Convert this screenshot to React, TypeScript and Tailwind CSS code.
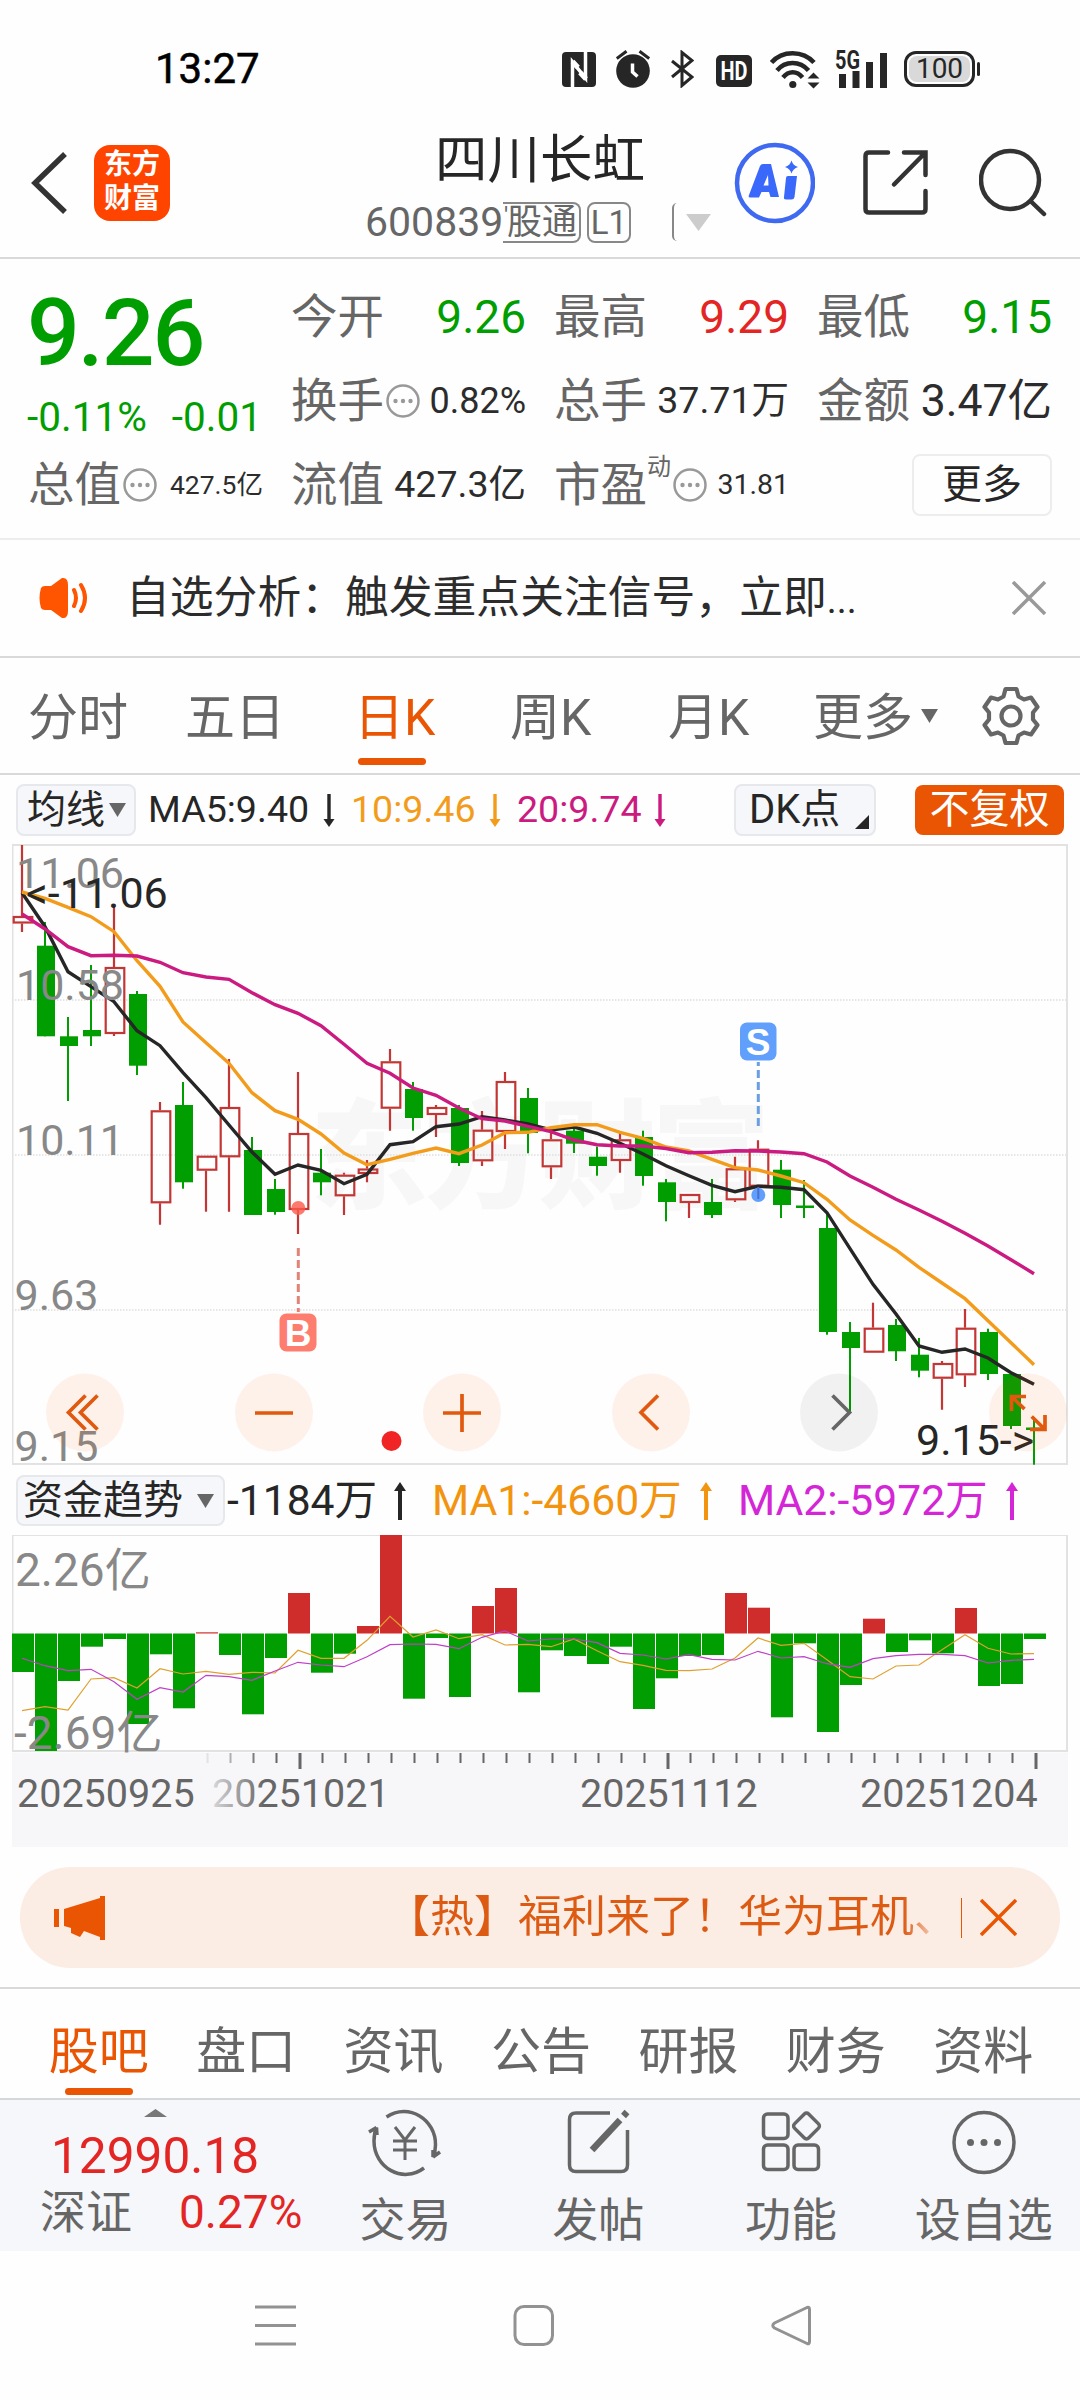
import type { ReactNode } from "react";

const GREEN = "#009e00";
const RED = "#c23735";

// [high, body top, body bottom, low, up?] in chart pixels, one entry per trading day
const CANDLES: [number, number, number, number, number][] = [
  [845, 916, 923.5, 932, 1], [922, 945.7, 1036.3, 1036.3, 0], [1017, 1036.3, 1046, 1101, 0],
  [965, 1030, 1036.3, 1046, 0], [906, 967, 1034, 1036, 1], [991, 994, 1065.7, 1075, 0],
  [1102, 1110.3, 1203.3, 1224.7, 1], [1082, 1105, 1182.3, 1188.7, 0], [1155.7, 1155.7, 1170.7, 1211.7, 1],
  [1059, 1107, 1157.3, 1211.7, 1], [1137, 1150, 1215, 1215, 0], [1179, 1189, 1212, 1214.7, 0],
  [1072, 1133, 1210, 1234, 1], [1149, 1172.7, 1182.3, 1195.3, 0], [1172.7, 1174.7, 1196.3, 1215, 1],
  [1160, 1168.5, 1174, 1182.3, 1], [1049, 1061.3, 1108.7, 1130.7, 1], [1082, 1089, 1118, 1130.7, 0],
  [1105, 1107, 1115, 1137, 1], [1105, 1108, 1163, 1166, 0], [1111, 1129.7, 1161.3, 1166, 1],
  [1072, 1081, 1132, 1149, 1], [1088, 1098, 1133, 1153.3, 0], [1131.7, 1139.3, 1167.3, 1179, 1],
  [1126, 1130.7, 1143.7, 1153, 0], [1146.7, 1156.7, 1166, 1175.7, 0], [1133, 1139.3, 1161, 1172.7, 1],
  [1130.7, 1137, 1176, 1185.7, 0], [1179, 1182.3, 1202, 1221.3, 0], [1194, 1194, 1203, 1218, 1],
  [1179, 1202, 1215, 1218, 0], [1156.7, 1168.3, 1200.3, 1202, 1], [1140.3, 1148.7, 1186.7, 1199, 1],
  [1160, 1169.7, 1205, 1218, 0], [1180, 1205.5, 1208, 1218, 0], [1213, 1228, 1332, 1334.7, 0],
  [1322, 1332, 1348, 1413, 0], [1302.7, 1327.7, 1352.7, 1352.7, 1], [1319, 1325, 1351.3, 1361, 0],
  [1338, 1354.7, 1370.7, 1377.3, 0], [1361, 1363, 1378.7, 1409.7, 1], [1309, 1327.7, 1375.3, 1387, 1],
  [1328.7, 1332, 1374, 1380, 0], [1374, 1374, 1426, 1429, 0], [1419, 1427.5, 1430, 1464.7, 0],
];

const MA5 = [
  892.7, 926.7, 971.7, 986.7, 1001.7, 1030.7, 1045.7, 1072.7, 1097.7, 1125, 1152, 1174.3, 1165, 1170.3, 1183.7,
  1174.3, 1144.7, 1141.7, 1126.7, 1124, 1116.7, 1120, 1124, 1130, 1127, 1133.3, 1143.3, 1154, 1165.7, 1175.7,
  1185.3, 1191.7, 1186.3, 1187.3, 1189.7, 1212.7, 1248.7, 1284.3, 1314, 1346, 1352.3, 1349, 1358, 1372.7, 1384.3,
];
const MA10 = [
  892, 898.3, 907.3, 916.7, 931.7, 960.7, 986.3, 1022, 1042.7, 1063.3, 1092.7, 1110.7, 1119.3, 1134, 1153,
  1164.7, 1159.3, 1153.3, 1148, 1153.7, 1145, 1132.7, 1132.3, 1127.7, 1124.7, 1124.7, 1132.3, 1138.3, 1147, 1151,
  1159.3, 1167.7, 1170, 1176, 1182.7, 1199.3, 1220, 1235.3, 1250, 1267.3, 1283, 1298.7, 1320.7, 1342.7, 1364.7,
];
const MA20 = [
  914, 929, 946.7, 955.7, 955.3, 956, 962.3, 972.7, 977, 979.3, 992.7, 1004.7, 1013.3, 1025.7, 1044.3,
  1063.3, 1073.3, 1088, 1095.3, 1108, 1118.7, 1121, 1126.3, 1131.7, 1140, 1144.7, 1146, 1146, 1148.5, 1152.7,
  1152.3, 1150.7, 1151, 1152, 1153.7, 1162, 1176, 1187.3, 1199.3, 1210, 1221.3, 1233.3, 1246, 1259.7, 1273.7,
];

const ZERO = 1633.5;
const FLOW = [
  1672, 1751, 1681, 1646.7, 1639, 1724, 1654.3, 1708.3, 1632.3, 1655, 1714.3, 1658, 1593, 1672.7, 1653.7,
  1626, 1535, 1698.7, 1638, 1697, 1606, 1588, 1692.3, 1650.3, 1656, 1664, 1646.7, 1709, 1678.3, 1656,
  1655, 1593, 1607.7, 1717.3, 1643.3, 1732, 1685, 1618.7, 1652, 1640.3, 1653.3, 1608, 1686, 1684, 1639,
];
const FLOW_MA1 = [
  1710.7, 1706.7, 1710, 1679, 1677.7, 1688, 1668.7, 1674, 1671.3, 1674.3, 1672.3, 1673, 1650.3, 1658.3, 1658.3,
  1640.3, 1616.3, 1637, 1630, 1638.7, 1634.7, 1645, 1644.3, 1646.7, 1639, 1650.7, 1661.7, 1665.3, 1670.3, 1670.7,
  1669, 1658, 1638, 1645.3, 1643.3, 1659.7, 1676.7, 1679, 1666, 1665, 1649.7, 1634.7, 1648.3, 1654, 1653.7,
];
const FLOW_MA2 = [
  1658.3, 1665.7, 1670.7, 1669.3, 1681.7, 1699.3, 1687.7, 1692, 1675.3, 1676.7, 1680.3, 1671, 1662.3, 1665, 1666.7,
  1656.7, 1644.7, 1644, 1644.3, 1648.7, 1637.3, 1631, 1641, 1639, 1639, 1642.7, 1653.3, 1655, 1659, 1654.7,
  1659.3, 1660, 1651.3, 1658, 1656.7, 1663.7, 1667.3, 1658.7, 1655.7, 1654.3, 1654.3, 1655.7, 1663, 1660.3, 1659.3,
];

const dayX = (i: number) => 22 + 23 * i;
const points = (ys: number[]) => ys.map((y, i) => `${dayX(i)},${y}`).join(" ");

function StatusBar() {
  return (
    <div className="flex h-[136px] items-center pt-[2px] pl-[155px] text-[#262626]">
      <span className="w-[407px] text-[42px] leading-none text-black [-webkit-text-stroke:0.5px_black]">13:27</span>
      <svg width="34" height="35" viewBox="0 0 34 35">
        <rect width="34" height="35" rx="4" fill="#262626" />
        <path d="M10.500 35V10L23.500 26V0" fill="none" stroke="#fff" strokeWidth="3.500" />
        <path d="M10.500 9.500L16 15.500M18 20.500L24 27" stroke="#fff" strokeWidth="5" />
      </svg>
      <svg className="ml-5" width="34" height="38" viewBox="0 0 34 38" fill="none" stroke="#262626">
        <circle cx="17" cy="21" r="16.800" fill="#262626" stroke="none" />
        <path d="M0.800 8.500L10.500 1.200M33.200 8.500L23.500 1.200" strokeWidth="3" />
        <path d="M16.500 13.500V22L21.500 26.500" stroke="#fff" strokeWidth="3.500" />
      </svg>
      <svg className="ml-[21px]" width="23" height="38" viewBox="0 0 23 38" fill="none" stroke="#262626" strokeWidth="3">
        <path d="M1 11L21 27L11 35.500V2.500L21 10.500L1 27" />
      </svg>
      <span className="mt-[3px] ml-[22px] flex h-8 w-9 items-center justify-center rounded-[5px] bg-[#262626]">
        <svg className="overflow-visible" width="28" height="30" viewBox="0 0 28 30">
          <text x="0.500" y="24" textLength="27" lengthAdjust="spacingAndGlyphs" fontSize="25" fontWeight="700" fill="#fff">HD</text>
        </svg>
      </span>
      <svg className="ml-[18px]" width="50" height="39" viewBox="0 0 50 39" fill="none" stroke="#262626" strokeWidth="4.500">
        <path d="M1.500 12.500C12 0 33 0 44 12.500" />
        <path d="M7 20.500C15 10.500 30 10.500 38.500 20.500" />
        <path d="M13 27.500C18.500 20.500 27 20.500 32.500 27.500" />
        <circle cx="22.800" cy="34.500" r="3.600" fill="#262626" stroke="none" />
        <path d="M37.500 28.500L43.500 22.500L49.500 28.500ZM37.500 32.500L43.500 38.500L49.500 32.500Z" fill="#262626" stroke="none" />
      </svg>
      <svg className="ml-[15px] overflow-visible" width="53" height="37" viewBox="0 0 53 37" fill="#262626">
        <text x="0" y="18" textLength="25" lengthAdjust="spacingAndGlyphs" fontSize="25" fontWeight="700">5G</text>
        <rect x="4" y="23" width="7" height="14" />
        <rect x="17.500" y="20" width="7" height="17" />
        <rect x="31" y="11" width="7" height="26" />
        <rect x="45" y="2" width="7" height="35" />
      </svg>
      <div className="ml-4 flex h-9 w-[71px] items-center justify-center rounded-[12px] border-[3px] border-[#262626] p-[2px]">
        <span className="flex h-full w-full items-center justify-center rounded-[8px] bg-[#d9d9d9] text-[28px] leading-none">100</span>
      </div>
      <span className="ml-[2px] h-3.5 w-[3px] rounded-full bg-[#262626]" />
    </div>
  );
}

function Header() {
  return (
    <header className="flex h-[123px] border-b-2 border-[#d9d9d9]">
      <svg className="mt-4 ml-[31px]" width="37" height="62" viewBox="0 0 37 62" fill="none" stroke="#333" strokeWidth="5.500">
        <path d="M34 2L4 31L34 60" />
      </svg>
      <div className="mt-[9px] ml-[26px] flex h-[76px] w-[76px] flex-col items-center justify-center rounded-[16px] bg-[#ff4400] pb-[2px] text-[28px] leading-[34px] font-bold text-white">
        <span>东方</span>
        <span>财富</span>
      </div>
      <div className="ml-[195px] w-[370px]">
        <h1 className="pl-[70px] text-[52.500px] leading-[49px] font-normal text-[#262626]">四川长虹</h1>
        <div className="mt-[16px] flex h-[42px] items-center text-[#666]">
          <span className="w-[138px] text-[41px] leading-none">600839</span>
          <span className="flex h-[41px] w-[78px] items-center justify-end overflow-hidden rounded-r-[8px] border-2 border-l-0 border-[#888] pr-[2px] text-[35px] leading-none">
            <span className="w-[3px] self-start text-[24px]">'</span>股通
          </span>
          <span className="ml-[6px] flex h-[41px] w-[44px] items-center justify-center rounded-[8px] border-2 border-[#888] text-[33px] leading-none">L1</span>
          <span className="ml-[41px] h-[38px] w-[5px] rounded-l-[8px] border-l-2 border-[#888]" />
          <svg className="ml-[9px]" width="25" height="17" viewBox="0 0 25 17">
            <path d="M0 0H25L12.500 17Z" fill="#ccc" />
          </svg>
        </div>
      </div>
      <svg className="mt-[6px] ml-[-2px]" width="82" height="82" viewBox="0 0 82 82">
        <circle cx="42" cy="41" r="38" fill="none" stroke="#3e69f0" strokeWidth="4.500" />
        <path d="M30 22H38L46 55H37.500L36 50H28.500L26 55.500H17Q15 55.500 16 53L27 24Q28 22 30 22ZM35 33L30.500 43.500H35.500Z" fill="#3a68fb" fillRule="evenodd" />
        <path d="M55 34H64L61.500 55Q61 57.500 58.500 57.500H53Q50.500 57.500 51 55L53 36Q53 34 55 34Z" fill="#3a68fb" />
        <path d="M58.500 18.500Q60 23.500 65 25Q60 26.500 58.500 31.500Q57 26.500 52 25Q57 23.500 58.500 18.500Z" fill="#3a68fb" />
      </svg>
      <svg className="mt-[13px] ml-[47px]" width="67" height="67" viewBox="0 0 67 67" fill="none" stroke="#333" strokeWidth="4.500" strokeLinecap="round">
        <path d="M26 3.500H7Q3.500 3.500 3.500 7V60Q3.500 63.500 7 63.500H60Q63.500 63.500 63.500 60V42" />
        <path d="M42 3.500H63.500V26M61 6L32 35.500" strokeLinejoin="miter" />
      </svg>
      <svg className="mt-[11px] ml-[50px]" width="68" height="70" viewBox="0 0 68 70" fill="none" stroke="#333" strokeWidth="4.500" strokeLinecap="round">
        <circle cx="31" cy="33" r="29" />
        <path d="M52 54.500L65 67" />
      </svg>
    </header>
  );
}

function MoreDots() {
  return (
    <svg className="ml-[2px] shrink-0" width="34" height="34" viewBox="0 0 34 34" fill="#999">
      <circle cx="17" cy="17" r="15.500" fill="none" stroke="#999" strokeWidth="2.500" />
      <circle cx="9.500" cy="17" r="2.200" />
      <circle cx="17" cy="17" r="2.200" />
      <circle cx="24.500" cy="17" r="2.200" />
    </svg>
  );
}

function Stat({ label, children }: { label: ReactNode; children: ReactNode }) {
  return (
    <div className="flex h-[84px] items-center justify-between leading-none whitespace-nowrap text-[#2c2c2c]">
      <span className="flex items-center text-[46.500px] text-[#666]">{label}</span>
      {children}
    </div>
  );
}

function Stats() {
  return (
    <section className="grid h-[281px] grid-cols-4 content-start gap-x-[28px] border-b-2 border-[#ededed] px-7 pt-4">
      <div className="row-span-2 text-[#009e00]">
        <div className="mt-[14px] -ml-px text-[93px] leading-[90px] font-medium tracking-[-2px]">9.26</div>
        <div className="mt-[13px] -ml-px flex justify-between pr-px text-[40.500px] leading-[50px]">
          <span>-0.11%</span>
          <span>-0.01</span>
        </div>
      </div>
      <Stat label="今开"><span className="text-[46px] text-[#009e00]">9.26</span></Stat>
      <Stat label="最高"><span className="text-[46px] text-[#e32524]">9.29</span></Stat>
      <Stat label="最低"><span className="text-[46px] text-[#009e00]">9.15</span></Stat>
      <Stat label={<>换手<MoreDots /></>}><span className="text-[36px]">0.82%</span></Stat>
      <Stat label="总手"><span className="text-[37.500px]">37.71万</span></Stat>
      <Stat label="金额"><span className="text-[44.500px]">3.47亿</span></Stat>
      <Stat label={<>总值<MoreDots /></>}><span className="text-[26.500px]">427.5亿</span></Stat>
      <Stat label="流值"><span className="text-[37.500px]">427.3亿</span></Stat>
      <Stat label={<>市盈<span className="-mt-9 text-[24px]">动</span><MoreDots /></>}>
        <span className="text-[28.500px]">31.81</span>
      </Stat>
      <div className="flex h-[84px] items-center justify-end">
        <button className="h-[62px] w-[140px] rounded-[8px] border-2 border-[#ededed] text-[40px] leading-none text-[#262626]">更多</button>
      </div>
    </section>
  );
}

function Notice() {
  return (
    <section className="flex h-[118px] items-center border-b-2 border-[#d9d9d9] pl-[38px] text-[44px] leading-none text-[#2c2c2c]">
      <svg width="52" height="42" viewBox="0 0 52 42" fill="none" stroke="#ff5500" strokeWidth="4" strokeLinecap="round">
        <path d="M3 11Q0 21 3 31Q4 33 7 33H13L24 41Q30 42 30 34V8Q30 0 24 1L13 9H7Q4 9 3 11Z" fill="#ff5500" stroke="none" />
        <path d="M36 13Q40 21 36 29M43 8Q51 21 43 34" />
      </svg>
      <span className="mt-[2px] ml-[36px] text-[43.800px]">
        自选分析：触发重点关注信号，立即<span className="text-[38px]">...</span>
      </span>
      <svg className="ml-auto mr-[34px]" width="34" height="34" viewBox="0 0 34 34" stroke="#999" strokeWidth="3.500">
        <path d="M1 1L33 33M33 1L1 33" />
      </svg>
    </section>
  );
}

function ChartTabs() {
  return (
    <nav className="flex h-[117px] items-center border-b-2 border-[#d9d9d9] pl-[28px] text-[50px] leading-none text-[#666]">
      <span className="mt-[5px] w-[157px]">分时</span>
      <span className="mt-[5px] w-[169px]">五日</span>
      <span className="relative mt-[5px] flex w-[156px] text-[#ea5504]">
        日K
        <span className="absolute top-[65px] left-[4px] h-[7px] w-[68px] rounded-full bg-[#ea5504]" />
      </span>
      <span className="mt-[5px] w-[158px]">周K</span>
      <span className="mt-[5px] w-[145px]">月K</span>
      <span className="mt-[5px]">更多</span>
      <svg className="ml-[8px]" width="17" height="14" viewBox="0 0 17 14">
        <path d="M0 0H17L8.500 14Z" fill="#666" />
      </svg>
      <svg className="ml-[43px]" width="60" height="60" viewBox="0 0 60 60" fill="none" stroke="#666" strokeWidth="4.200" strokeLinejoin="round">
        <path d="M24.500 3H35.500L37.500 10.500L43 13.500L50 11.500L56.500 21L52 26.500V33.500L56.500 39L50 48.500L43 46.500L37.500 49.500L35.500 57H24.500L22.500 49.500L17 46.500L10 48.500L3.500 39L8 33.500V26.500L3.500 21L10 11.500L17 13.500L22.500 10.500Z" />
        <circle cx="30" cy="30" r="9.500" />
      </svg>
    </nav>
  );
}

function Arrow({ up, className }: { up?: boolean; className: string }) {
  return (
    <svg className={className} width="12" height="38" viewBox="0 0 12 38" fill="currentColor">
      <path d={up ? "M6 0L12 9H8V38H4V9H0Z" : "M6 36L11.500 28H7.700V3H4.300V28H0.500Z"} />
    </svg>
  );
}

function MaRow() {
  return (
    <div className="flex h-[69px] items-center pt-px pl-4 text-[37.600px] leading-none whitespace-nowrap">
      <div className="flex h-[52px] w-[120px] items-center rounded-[8px] border-2 border-[#e6e8ec] bg-[#f6f7fa] pl-[9px] text-[39px] text-[#262626]">
        均线
        <svg className="ml-[4px] shrink-0" width="17" height="14" viewBox="0 0 17 14">
          <path d="M0 0H17L8.500 14Z" fill="#666" />
        </svg>
      </div>
      <span className="ml-[12px] w-[162px] text-[#262626]">MA5:9.40</span>
      <Arrow className="ml-[13px] text-[#262626]" />
      <span className="ml-[16px] w-[125px] text-[#f39c1c]">10:9.46</span>
      <Arrow className="ml-[13px] text-[#f39c1c]" />
      <span className="ml-[16px] w-[125px] text-[#cb1a80]">20:9.74</span>
      <Arrow className="ml-[12px] text-[#cb1a80]" />
      <div className="ml-[68px] flex h-[52px] w-[142px] items-center justify-between rounded-[8px] border-2 border-[#e6e8ec] bg-[#f6f7fa] pr-[5px] pl-[13px] text-[40px] text-[#262626]">
        DK点
        <svg className="mt-6" width="14" height="14" viewBox="0 0 14 14">
          <path d="M14 0V14H0Z" fill="#262626" />
        </svg>
      </div>
      <div className="ml-[39px] flex h-[50px] w-[149px] items-center justify-center rounded-[8px] bg-[#ea5504] text-[40px] text-white">不复权</div>
    </div>
  );
}

function Candle({ i }: { i: number }) {
  const [high, top, bottom, low, up] = CANDLES[i];
  const x = dayX(i);
  if (up) {
    return (
      <g stroke={RED} strokeWidth="2.200" fill="none">
        <path d={`M${x} ${high}V${top}M${x} ${bottom}V${low}`} />
        <rect x={x - 8.3} y={top + 1} width="18.600" height={Math.max(bottom - top - 2, 1)} />
      </g>
    );
  }
  return (
    <g fill={GREEN}>
      <rect x={x - 1} y={high} width="2" height={low - high} />
      <rect x={x - 8} y={top} width="18" height={bottom - top} />
    </g>
  );
}

function PriceChart() {
  return (
    <svg className="ml-3 block" width="1056" height="622" viewBox="12 844 1056 622" fontSize="43">
      <text x="310" y="1199" textLength="460" fontSize="118" fontWeight="900" fill="#f7f7f7">东方财富</text>
      <path d="M12 1000H1067M12 1155H1067M12 1310H1067" stroke="#dedede" strokeWidth="1.500" strokeDasharray="1.500 1.500" />
      <rect x="12.500" y="845" width="1054.500" height="619" fill="none" stroke="#e2e2e2" strokeWidth="2" />
      {CANDLES.map((_, i) => (
        <Candle key={i} i={i} />
      ))}
      <g fill="none" strokeWidth="3.400">
        <polyline points={points(MA5)} stroke="#262626" />
        <polyline points={points(MA10)} stroke="#f39c1c" />
        <polyline points={points(MA20)} stroke="#cb1a80" />
      </g>
      <g fill="#888">
        <text x="16" y="888">11.06</text>
        <text x="16" y="1000">10.58</text>
        <text x="16" y="1155">10.11</text>
        <text x="14.500" y="1310">9.63</text>
        <text x="14.500" y="1461">9.15</text>
      </g>
      <text x="26" y="908" fill="#262626">&lt;-11.06</text>
      <text x="916" y="1455" fill="#262626">9.15-&gt;</text>

      <circle cx="298.300" cy="1208" r="7" fill="#fd5a4a" fillOpacity="0.800" />
      <path d="M298.300 1248V1312" stroke="#e38378" strokeWidth="3" strokeDasharray="8 4" />
      <rect x="279.500" y="1313.500" width="37" height="38" rx="7" fill="#fd7e6f" />
      <text x="298" y="1346" textAnchor="middle" fontSize="37" fontWeight="700" fill="#fff" fontFamily="Liberation Sans">B</text>

      <circle cx="758.300" cy="1195" r="7" fill="#609ffb" />
      <path d="M758.300 1187V1199" stroke="#4b6fd0" strokeWidth="2" />
      <path d="M758.300 1126V1062" stroke="#6a9fe2" strokeWidth="3" strokeDasharray="8 4" />
      <rect x="740" y="1022.500" width="36.500" height="38" rx="7" fill="#609ffb" />
      <text x="758" y="1055" textAnchor="middle" fontSize="37" fontWeight="700" fill="#fff" fontFamily="Liberation Sans">S</text>

      <g fill="#ff5a00" fillOpacity="0.080">
        <circle cx="85" cy="1412.500" r="39" />
        <circle cx="274" cy="1412.500" r="39" />
        <circle cx="462" cy="1412.500" r="39" />
        <circle cx="651" cy="1412.500" r="39" />
        <circle cx="839" cy="1412.500" r="39" fill="#000" fillOpacity="0.050" />
        <circle cx="1028" cy="1412.500" r="39" />
      </g>
      <g fill="none" stroke="#e0590f" strokeWidth="3.700">
        <path d="M85.500 1395.500L68.500 1412.500L85.500 1429.500M97.500 1395.500L80.500 1412.500L97.500 1429.500" />
        <path d="M255 1413H293M443 1413H481M462 1394V1432" />
        <path d="M658 1395.500L641 1412.500L658 1429.500" />
        <path d="M832.500 1395.500L849.500 1412.500L832.500 1429.500" stroke="#666" />
        <path d="M1026 1396.500H1011.500V1411M1011.500 1396.500L1024.500 1409M1045 1415V1429.500H1030M1045 1429.500L1031.700 1416.500" />
      </g>
      <circle cx="391.500" cy="1441" r="10" fill="#f02424" />
    </svg>
  );
}

function FlowRow() {
  return (
    <div className="flex h-[69px] items-center pl-4 text-[42.600px] leading-none whitespace-nowrap">
      <div className="flex h-[51px] w-[209px] items-center rounded-[8px] border-2 border-[#e6e8ec] bg-[#f6f7fa] pl-[5px] text-[40px] text-[#262626]">
        资金趋势
        <svg className="ml-[14px] shrink-0" width="17" height="14" viewBox="0 0 17 14">
          <path d="M0 0H17L8.500 14Z" fill="#666" />
        </svg>
      </div>
      <span className="ml-[2px] w-[151px] text-[#262626]">-1184万</span>
      <Arrow up className="ml-[16px] text-[#262626]" />
      <span className="ml-[26px] w-[251px] text-[#f39411]">MA1:-4660万</span>
      <Arrow up className="ml-[17px] text-[#f39411]" />
      <span className="ml-[26px] w-[251px] text-[#d426d6]">MA2:-5972万</span>
      <Arrow up className="ml-[17px] text-[#d426d6]" />
    </div>
  );
}

function FlowChart() {
  return (
    <svg className="ml-3 block" width="1056" height="312" viewBox="12 1535 1056 312">
      <defs>
        <linearGradient id="axisFade">
          <stop offset="0" stopColor="#f7f7fa" />
          <stop offset="1" stopColor="#f7f7fa" stopOpacity="0" />
        </linearGradient>
      </defs>
      <path d="M12.500 1751V1535H1067V1751Z" fill="none" stroke="#e2e2e2" strokeWidth="2" />
      {FLOW.map((y, i) => (
        <rect
          key={i}
          x={12 + 23 * i}
          y={Math.min(y, ZERO)}
          width="22"
          height={Math.abs(y - ZERO)}
          fill={y < ZERO ? "#cf2d2c" : GREEN}
        />
      ))}
      <g fill="none" strokeWidth="1.200">
        <polyline points={points(FLOW_MA1)} stroke="#e0a030" />
        <polyline points={points(FLOW_MA2)} stroke="#c040c8" />
      </g>
      <g fill="#888" fontSize="46">
        <text x="15" y="1586">2.26亿</text>
        <text x="14" y="1748.500">-2.69亿</text>
      </g>
      <rect x="12" y="1752.500" width="1056" height="95" fill="#f7f7fa" />
      {FLOW.map((_, i) => {
        if (i < 8) return null;
        const major = i % 16 === 12;
        return (
          <rect key={i} x={22.5 + 23 * i} y="1753" width={major ? 3 : 2} height={major ? 16 : 10} fill="#666" />
        );
      })}
      <g fill="#666" fontSize="39.500">
        <text x="17" y="1807">20250925</text>
        <text x="212" y="1807">20251021</text>
        <text x="580" y="1807">20251112</text>
        <text x="860" y="1807">20251204</text>
      </g>
      <rect x="198" y="1753" width="66" height="94" fill="url(#axisFade)" />
    </svg>
  );
}

function Banner() {
  return (
    <div className="mx-5 mt-5 flex h-[101px] items-center rounded-[50px] bg-[#fcede4] pl-[33px] text-[44px] leading-none text-[#ea5504]">
      <svg width="53" height="46" viewBox="0 0 53 46" fill="#ea5504">
        <path d="M1 14H6V32H1ZM11 14L47 3V1H52V45H47V42L31 36L27 42L18 38V33L11 31Z" />
      </svg>
      <span className="mt-px ml-[280px] h-[46px] w-[556px] overflow-hidden bg-[linear-gradient(90deg,#dd5a13_93%,#fcede4)] bg-clip-text whitespace-nowrap text-transparent">
        【热】福利来了！华为耳机、
      </span>
      <span className="ml-[19px] h-10 w-px bg-[#ea5504]" />
      <svg className="ml-[18px]" width="37" height="37" viewBox="0 0 37 37" stroke="#ea5504" strokeWidth="3.500">
        <path d="M1 1L36 36M36 1L1 36" />
      </svg>
    </div>
  );
}

function InfoTabs() {
  const tabs = ["股吧", "盘口", "资讯", "公告", "研报", "财务", "资料"];
  return (
    <nav className="mt-[19px] grid h-[111px] grid-cols-7 border-t-2 border-[#d9d9d9] pr-[23px] pl-[25px] text-center text-[50px] text-[#666]">
      {tabs.map((tab, i) => (
        <span key={tab} className={i === 0 ? "flex flex-col items-center text-[#ea5504]" : ""}>
          <span className="block pt-[36px] leading-[54px]">{tab}</span>
          {i === 0 && <span className="mt-[9px] h-[7px] w-[68px] rounded-full bg-[#ea5504]" />}
        </span>
      ))}
    </nav>
  );
}

function BottomItem({ label, children }: { label: string; children: ReactNode }) {
  return (
    <div className="flex flex-1 flex-col items-center pt-2 text-[46px] leading-none text-[#666]">
      <svg width="76" height="70" viewBox="0 0 76 70" fill="none" stroke="#666" strokeWidth="3.500">
        {children}
      </svg>
      <span className="mt-[19px]">{label}</span>
    </div>
  );
}

function BottomBar() {
  return (
    <footer className="flex h-[153px] border-t-2 border-[#d4d8dd] bg-[#f6f7fa]">
      <div className="w-[309px] text-[#e32524]">
        <svg className="mt-[9px] ml-[144px]" width="23" height="8" viewBox="0 0 23 8">
          <path d="M0 8L11.500 0L23 8Z" fill="#777" />
        </svg>
        <div className="mt-[12px] pl-[51px] text-[49.600px] leading-[54px]">12990.18</div>
        <div className="mt-[4px] flex items-center pl-[40px] leading-[50px]">
          <span className="w-[139px] text-[46px] text-[#666]">深证</span>
          <span className="text-[46px]">0.27%</span>
        </div>
      </div>
      <BottomItem label="交易">
        <path d="M19.500 9C42 -6 69 12 68.500 37C68.500 42 68 45 66 49L66 42M66 49L73 44" />
        <path d="M57 60C36 76 7 60 7 33C7 28 7.500 24 9.500 19.500L10 27M9.500 19.500L2 24" />
        <path d="M28 19L38 32L48 19M26 33H50M26 42H50M38 32V52" strokeWidth="3" />
      </BottomItem>
      <BottomItem label="发帖">
        <path d="M50 5H16Q9.500 5 9.500 11.500V57Q9.500 63.500 16 63.500H61Q67.500 63.500 67.500 57V22" />
        <path d="M32 42L60 12" strokeWidth="6.500" />
        <path d="M63.500 8L67 4" strokeWidth="6.500" />
      </BottomItem>
      <BottomItem label="功能">
        <rect x="10.500" y="6" width="24.500" height="24.500" rx="4" />
        <rect x="10.500" y="37" width="24.500" height="24.500" rx="4" />
        <rect x="41" y="37" width="24.500" height="24.500" rx="4" />
        <rect x="43.500" y="8" width="20" height="20" rx="3" transform="rotate(45 53.500 18)" />
      </BottomItem>
      <BottomItem label="设自选">
        <circle cx="38" cy="34.500" r="30" />
        <g fill="#666" stroke="none">
          <circle cx="24.500" cy="34.500" r="3.500" />
          <circle cx="38" cy="34.500" r="3.500" />
          <circle cx="51.500" cy="34.500" r="3.500" />
        </g>
      </BottomItem>
    </footer>
  );
}

function SystemNav() {
  return (
    <div className="flex h-[149px] pt-[53px]">
      <svg className="ml-[255px]" width="41" height="42" viewBox="0 0 41 42" stroke="#929292" strokeWidth="3">
        <path d="M0 3H41M0 21.500H41M0 40H41" />
      </svg>
      <svg className="ml-[217px]" width="41" height="42" viewBox="0 0 41 42" fill="none" stroke="#929292" strokeWidth="3">
        <rect x="2" y="2.500" width="37.500" height="38" rx="9" />
      </svg>
      <svg className="ml-[216px]" width="43" height="42" viewBox="0 0 43 42" fill="none" stroke="#929292" strokeWidth="3">
        <path d="M37 3.500L4.500 19Q1 21.500 4.500 24L37 39.500Q39.500 40.500 39.500 37.500V5.500Q39.500 2.500 37 3.500Z" />
      </svg>
    </div>
  );
}

export default function App() {
  return (
    <div lang="zh-CN" className="h-[2400px] w-[1080px] overflow-hidden bg-[#fefefe] font-[Roboto,'Noto_Sans_CJK_SC',sans-serif]">
      <StatusBar />
      <Header />
      <Stats />
      <Notice />
      <ChartTabs />
      <MaRow />
      <PriceChart />
      <FlowRow />
      <FlowChart />
      <Banner />
      <InfoTabs />
      <BottomBar />
      <SystemNav />
    </div>
  );
}
